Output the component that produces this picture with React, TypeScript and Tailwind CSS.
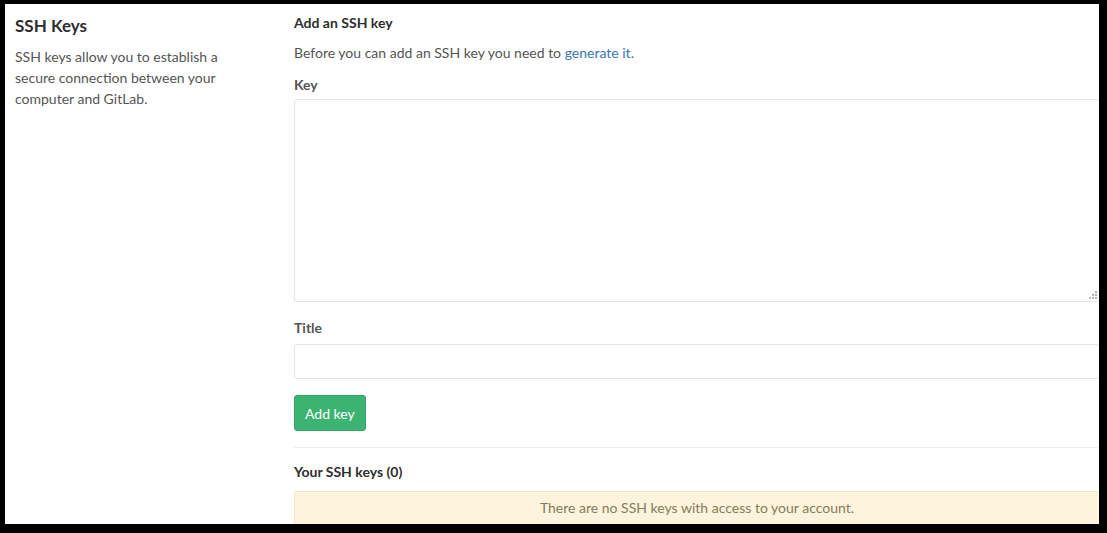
export default function App() {
  return (
    <div className="min-h-screen bg-black pt-[4px] pl-[5px] pr-[8px] pb-[9px] font-['Lato',sans-serif]">
      <div className="h-[520px] bg-white overflow-hidden flex pl-[10px]">
        {/* left: description */}
        <div className="w-[279px] shrink-0 pt-[11px]">
          <h4 className="text-[17px] font-bold text-[#2e2e2e] leading-[22px]">SSH Keys</h4>
          <p className="mt-[9px] text-[14px] leading-[21px] text-[#555] w-[222px]">
            SSH keys allow you to establish a secure connection between your computer and GitLab.
          </p>
        </div>

        {/* right: form */}
        <div className="w-[806px] shrink-0 pt-[9px]">
          <h5 className="text-[14px] font-bold text-[#2e2e2e] leading-[20px]">Add an SSH key</h5>
          <p className="mt-[10px] text-[14px] leading-[20px] text-[#555]">
            Before you can add an SSH key you need to{' '}
            <a href="#" className="text-[#3777b0]">generate it.</a>
          </p>

          <label className="block mt-[12px] text-[14px] font-bold text-[#555] leading-[20px]">Key</label>
          <div className="relative mt-[4px]">
            <textarea className="block w-full h-[203px] border border-[#e5e5e5] rounded-[3px] outline-none resize-none" />
            {/* resize grip */}
            <svg className="absolute right-[3px] bottom-[3px]" width="8" height="8" viewBox="0 0 8 8" fill="#b5b5b5">
              <rect x="6" y="0" width="2" height="2" />
              <rect x="3" y="3" width="2" height="2" />
              <rect x="6" y="3" width="2" height="2" />
              <rect x="0" y="6" width="2" height="2" />
              <rect x="3" y="6" width="2" height="2" />
              <rect x="6" y="6" width="2" height="2" />
            </svg>
          </div>

          <label className="block mt-[16px] text-[14px] font-bold text-[#555] leading-[20px]">Title</label>
          <input className="block mt-[6px] w-full h-[35px] border border-[#e5e5e5] rounded-[3px] outline-none" />

          <button className="mt-[16px] h-[36px] px-[10px] rounded-[3px] bg-[#3cb371] border border-[#33a464] text-white text-[14px]">
            Add key
          </button>

          <hr className="mt-[16px] border-t border-[#eeeeee]" />

          <h5 className="mt-[14px] text-[14px] font-bold text-[#2e2e2e] leading-[20px]">Your SSH keys (0)</h5>
          <div className="mt-[9px] h-[40px] pt-[6px] bg-[#fcf4dd] border border-[#f3e6c3] rounded-[2px] text-center text-[14px] leading-[20px] text-[#8a7a5a]">
            There are no SSH keys with access to your account.
          </div>
        </div>
      </div>
    </div>
  );
}
